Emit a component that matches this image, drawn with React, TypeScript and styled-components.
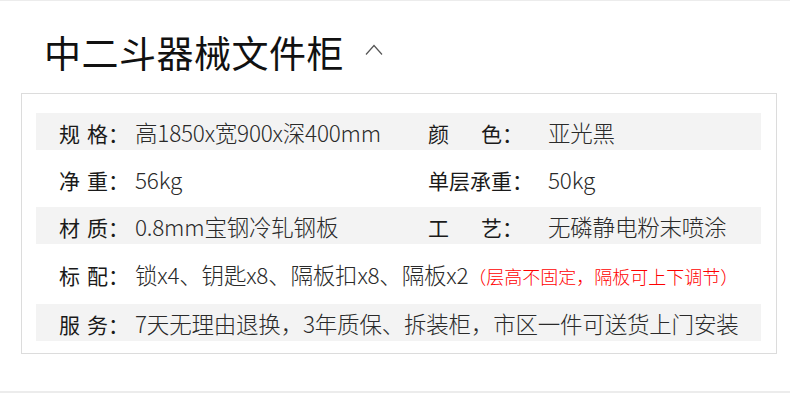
import React from "react";
import styled, { createGlobalStyle } from "styled-components";

const GlobalStyle = createGlobalStyle`
  html, body {
    margin: 0;
    padding: 0;
    background: #fff;
  }
  body {
    font-family: "Noto Sans CJK SC", "Noto Sans", sans-serif;
  }
`;

const Page = styled.div`
  width: 790px;
  height: 393px;
  box-sizing: border-box;
  border-top: 1px solid #ececec;
  border-bottom: 2px solid #ececec;
  overflow: hidden;
`;

const TitleBar = styled.div`
  display: flex;
  align-items: center;
  height: 92px;
  padding: 10px 0 0 44px;
  box-sizing: border-box;
`;

const Title = styled.h1`
  margin: 0;
  font-size: 37px;
  font-weight: 400;
  line-height: 1;
  color: #111;
  letter-spacing: 0.5px;
`;

const Toggle = styled.svg`
  width: 18px;
  height: 11px;
  margin: 0 0 6px 21px;
`;

const Box = styled.div`
  margin-left: 21px;
  width: 756px;
  box-sizing: border-box;
  border: 1px solid #dcdcdc;
  padding: 19px 15px 12px 14px;
`;

const Row = styled.div<{ $shaded?: boolean; $height: number }>`
  display: flex;
  align-items: center;
  height: ${props => props.$height}px;
  padding-left: 23px;
  background: ${props => (props.$shaded ? "#f3f3f3" : "transparent")};
`;

const Cell = styled.div<{ $width?: number }>`
  display: flex;
  align-items: baseline;
  flex: ${props => (props.$width ? `0 0 ${props.$width}px` : "1 1 auto")};
  white-space: nowrap;
`;

const Label = styled.span<{ $width: number }>`
  display: inline-flex;
  flex: 0 0 ${props => props.$width}px;
  font-size: 21px;
  color: #1a1a1a;
`;

const Spread = styled.span<{ $width: number }>`
  display: inline-flex;
  justify-content: space-between;
  width: ${props => props.$width}px;
`;

const Value = styled.span`
  font-size: 22.5px;
  font-weight: 300;
  color: #2a2a2a;
  letter-spacing: -0.2px;
`;

const Note = styled.span`
  font-size: 18px;
  color: #ff0000;
  letter-spacing: 0;
`;

function Field({ name, spread, width, children }: { name: string; spread?: number; width: number; children: React.ReactNode }) {
  const chars = name.split("");
  return (
    <>
      <Label $width={width}>
        {spread ? (
          <Spread $width={spread}>
            {chars.map((c, i) => (
              <span key={i}>{c}</span>
            ))}
          </Spread>
        ) : (
          name
        )}
        ：
      </Label>
      <Value>{children}</Value>
    </>
  );
}

export default function App() {
  return (
    <Page>
      <GlobalStyle />
      <TitleBar>
        <Title>中二斗器械文件柜</Title>
        <Toggle viewBox="0 0 18 11" fill="none">
          <path d="M1 10.5 L9 1.5 L17 10.5" stroke="#555" strokeWidth="1.2" />
        </Toggle>
      </TitleBar>
      <Box>
        <Row $shaded $height={37}>
          <Cell $width={369}>
            <Field name="规格" spread={49} width={76}>高1850x宽900x深400mm</Field>
          </Cell>
          <Cell>
            <Field name="颜色" spread={74} width={120}>亚光黑</Field>
          </Cell>
        </Row>
        <Row $height={57}>
          <Cell $width={369}>
            <Field name="净重" spread={49} width={76}>56kg</Field>
          </Cell>
          <Cell>
            <Field name="单层承重" width={120}>50kg</Field>
          </Cell>
        </Row>
        <Row $shaded $height={37}>
          <Cell $width={369}>
            <Field name="材质" spread={49} width={76}>0.8mm宝钢冷轧钢板</Field>
          </Cell>
          <Cell>
            <Field name="工艺" spread={74} width={120}>无磷静电粉末喷涂</Field>
          </Cell>
        </Row>
        <Row $height={60}>
          <Cell>
            <Field name="标配" spread={49} width={76}>
              锁x4、钥匙x8、隔板扣x8、隔板x2<Note>（层高不固定，隔板可上下调节）</Note>
            </Field>
          </Cell>
        </Row>
        <Row $shaded $height={37}>
          <Cell>
            <Field name="服务" spread={49} width={76}>7天无理由退换，3年质保、拆装柜，市区一件可送货上门安装</Field>
          </Cell>
        </Row>
      </Box>
    </Page>
  );
}
